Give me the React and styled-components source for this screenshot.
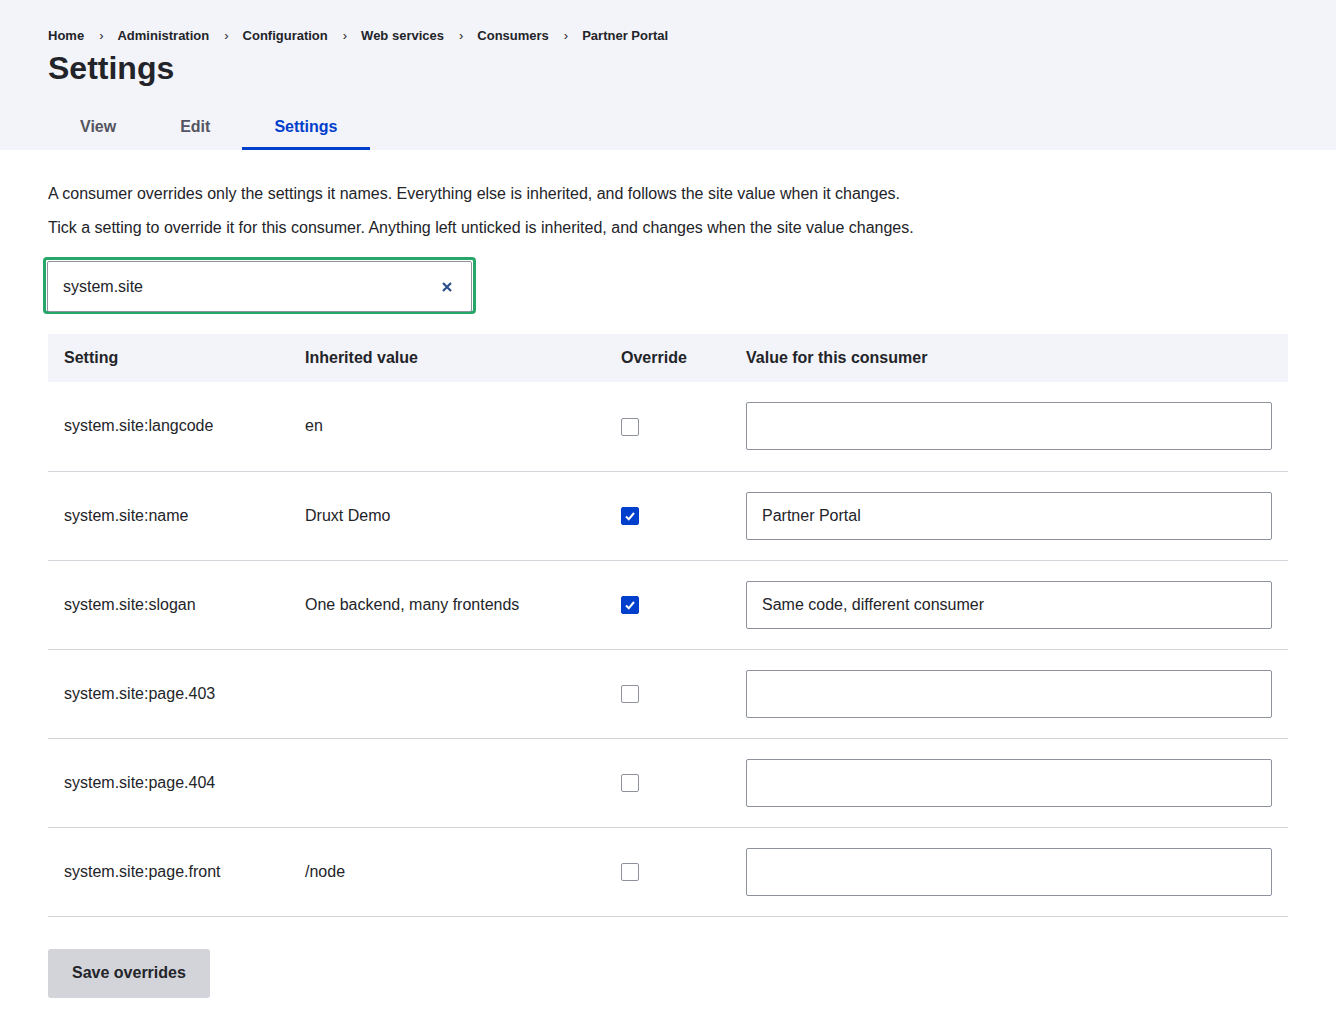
import React from "react";
import styled, { createGlobalStyle } from "styled-components";

const Global = createGlobalStyle`
  body { margin: 0; font-family: "Liberation Sans", Arial, sans-serif; color: #232429; background: #fff; }
`;

const Header = styled.header`
  background: #f3f4f9;
  padding: 28px 48px 0;
  height: 150px;
  box-sizing: border-box;
  display: flex;
  flex-direction: column;
`;
const Crumbs = styled.nav`
  display: flex;
  align-items: center;
  font-size: 13px;
  font-weight: 700;
  line-height: 15px;
`;
const Crumb = styled.span`
  color: #232429;
`;
const Sep = styled.span`
  margin: 0 14px 0 15px;
  font-weight: 400;
`;
const Title = styled.h1`
  margin: 6px 0 0;
  font-size: 32px;
  line-height: 38px;
  font-weight: 700;
`;
const Tabs = styled.div`
  display: flex;
  margin-top: auto;
`;
const Tab = styled.div`
  padding: 0 32px;
  height: 46px;
  display: flex;
  align-items: center;
  font-size: 16px;
  font-weight: 700;
  color: ${p => (p.$active ? "#003ecc" : "#545560")};
  border-bottom: 3px solid ${p => (p.$active ? "#003ecc" : "transparent")};
  box-sizing: border-box;
  padding-top: 2px;
`;
const Main = styled.main`
  padding: 34px 48px 0;
`;
const P = styled.p`
  margin: 0 0 15px;
  font-size: 16px;
  line-height: 19px;
`;
const SearchWrap = styled.div`
  width: 433px;
  height: 57px;
  box-sizing: border-box;
  border: 3px solid #26a769;
  border-radius: 4px;
  padding: 1px;
  margin: 20px 0 20px -5px;
`;
const Search = styled.div`
  height: 100%;
  border: 1px solid #8e929c;
  border-radius: 2px;
  display: flex;
  align-items: center;
  padding: 0 19px 0 15px;
  font-size: 16px;
  justify-content: space-between;
`;
const Table = styled.table`
  width: 1240px;
  border-collapse: collapse;
  font-size: 16px;
`;
const Th = styled.th`
  text-align: left;
  background: #f3f4f9;
  height: 48px;
  padding: 0 16px;
  font-weight: 700;
  width: ${p => p.$w}px;
  box-sizing: border-box;
`;
const Tr = styled.tr`
  border-bottom: 1px solid #d3d4d9;
  height: 89px;
`;
const Td = styled.td`
  padding: 0 16px;
`;
const Box = styled.span`
  display: inline-block;
  width: 18px;
  height: 18px;
  box-sizing: border-box;
  border-radius: 2px;
  border: 1px solid ${p => (p.$on ? "#003ecc" : "#8e929c")};
  background: ${p => (p.$on ? "#003ecc" : "#fff")};
  vertical-align: middle;
  position: relative;
  svg { position: absolute; left: 2px; top: 2px; }
`;
const Input = styled.div`
  height: 48px;
  border: 1px solid #8e929c;
  border-radius: 2px;
  box-sizing: border-box;
  display: flex;
  align-items: center;
  padding: 0 15px;
`;
const Button = styled.button`
  margin: 32px 0 0;
  background: #d3d4d9;
  border: none;
  border-radius: 3px;
  height: 49px;
  padding: 0 24px;
  font-family: inherit;
  font-size: 16px;
  font-weight: 700;
  color: #232429;
`;

const rows = [
  ["system.site:langcode", "en", false, ""],
  ["system.site:name", "Druxt Demo", true, "Partner Portal"],
  ["system.site:slogan", "One backend, many frontends", true, "Same code, different consumer"],
  ["system.site:page.403", "", false, ""],
  ["system.site:page.404", "", false, ""],
  ["system.site:page.front", "/node", false, ""],
];

export default function App() {
  const crumbs = ["Home", "Administration", "Configuration", "Web services", "Consumers", "Partner Portal"];
  return (
    <>
      <Global />
      <Header>
        <Crumbs>
          {crumbs.map((c, i) => (
            <React.Fragment key={c}>
              {i > 0 && <Sep>›</Sep>}
              <Crumb>{c}</Crumb>
            </React.Fragment>
          ))}
        </Crumbs>
        <Title>Settings</Title>
        <Tabs>
          <Tab>View</Tab>
          <Tab>Edit</Tab>
          <Tab $active>Settings</Tab>
        </Tabs>
      </Header>
      <Main>
        <P>A consumer overrides only the settings it names. Everything else is inherited, and follows the site value when it changes.</P>
        <P>Tick a setting to override it for this consumer. Anything left unticked is inherited, and changes when the site value changes.</P>
        <SearchWrap>
          <Search>
            <span>system.site</span>
            <svg width="10" height="10" viewBox="0 0 10 10"><path d="M1 1L9 9M9 1L1 9" stroke="#2a4f8a" strokeWidth="2.2" /></svg>
          </Search>
        </SearchWrap>
        <Table>
          <thead>
            <tr>
              <Th $w={241}>Setting</Th>
              <Th $w={316}>Inherited value</Th>
              <Th $w={125}>Override</Th>
              <Th $w={558}>Value for this consumer</Th>
            </tr>
          </thead>
          <tbody>
            {rows.map(r => (
              <Tr key={r[0]}>
                <Td>{r[0]}</Td>
                <Td>{r[1]}</Td>
                <Td>
                  <Box $on={r[2]}>
                    {r[2] && (
                      <svg width="12" height="12" viewBox="0 0 12 12"><path d="M2 6.5L4.8 9.2L10 3" fill="none" stroke="#fff" strokeWidth="2" /></svg>
                    )}
                  </Box>
                </Td>
                <Td><Input>{r[3]}</Input></Td>
              </Tr>
            ))}
          </tbody>
        </Table>
        <Button>Save overrides</Button>
      </Main>
    </>
  );
}
